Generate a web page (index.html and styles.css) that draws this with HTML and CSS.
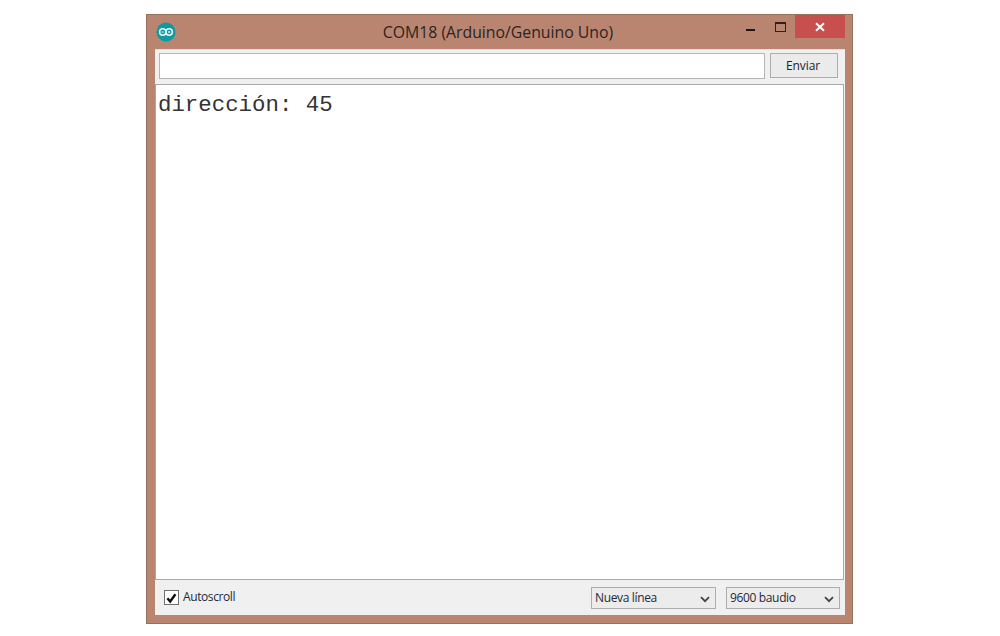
FILE: index.html
```html
<!DOCTYPE html>
<html lang="es">
<head>
<meta charset="utf-8">
<title>COM18 (Arduino/Genuino Uno)</title>
<link rel="stylesheet" href="styles.css">
</head>
<body>
<div class="window">
  <div class="titlebar">
    <svg class="logo" width="20" height="20" viewBox="0 0 20 20">
      <circle cx="10" cy="10" r="9.5" fill="#0f9a9f"/>
      <path d="M3.6 10a3.2 3.2 0 0 1 6.4 0a3.2 3.2 0 0 1 -6.4 0zM10 10a3.2 3.2 0 0 1 6.4 0a3.2 3.2 0 0 1 -6.4 0z" fill="none" stroke="#e4f5f5" stroke-width="1.5"/>
      <path d="M5.6 10h2.4M12 10h2.4M13.2 8.9v2.2" stroke="#e4f5f5" stroke-width="0.9"/>
    </svg>
    <div class="title">COM18 (Arduino/Genuino Uno)</div>
    <div class="controls">
      <span class="minimize"></span>
      <span class="maximize"></span>
      <span class="close">
        <svg width="10" height="10" viewBox="0 0 10 10"><path d="M1 1.2L9 8.8M9 1.2L1 8.8" stroke="#fff" stroke-width="2"/></svg>
      </span>
    </div>
  </div>
  <div class="client">
    <div class="sendbar">
      <div class="input"></div>
      <div class="button">Enviar</div>
    </div>
    <div class="output">dirección: 45</div>
    <div class="statusbar">
      <div class="check">
        <svg width="14" height="14" viewBox="0 0 14 14"><path d="M2.6 7.2L5.6 10.8L11.2 3" fill="none" stroke="#111" stroke-width="2.6"/></svg>
      </div>
      <span class="label">Autoscroll</span>
      <div class="select line"><span>Nueva línea</span><svg class="chev" width="10" height="7" viewBox="0 0 10 7"><path d="M1 1.2L5 5.2L9 1.2" fill="none" stroke="#444" stroke-width="1.8"/></svg></div>
      <div class="select baud"><span>9600 baudio</span><svg class="chev" width="10" height="7" viewBox="0 0 10 7"><path d="M1 1.2L5 5.2L9 1.2" fill="none" stroke="#444" stroke-width="1.8"/></svg></div>
    </div>
  </div>
</div>
</body>
</html>
```

FILE: styles.css
```css
* { box-sizing: border-box; }
html, body { margin: 0; height: 100%; background: #fff; overflow: hidden; }
body { padding-top: 14px; padding-left: 146px; font-family: "Open Sans", "Liberation Sans", sans-serif; }
.window {
  width: 707px;
  height: 610px;
  background: #b98570;
  border: 1px solid #97705f;
  display: flex;
  flex-direction: column;
  padding: 0 7px 8px 8px;
}
.titlebar {
  height: 34px;
  flex: none;
  display: flex;
  align-items: center;
  position: relative;
}
.logo { margin: 0 0 0 1px; flex: none; }
.title {
  position: absolute;
  left: 0;
  right: 4px;
  top: 7px;
  text-align: center;
  font-size: 15.8px;
  line-height: 20px;
  color: #2c2420;
}
.controls {
  position: absolute;
  top: -1px;
  right: 0;
  height: 24px;
  display: flex;
  align-items: flex-start;
}
.minimize {
  width: 9px;
  height: 2px;
  background: #1c1714;
  margin: 15px 20px 0 0;
}
.maximize {
  width: 11px;
  height: 10px;
  border: 1px solid #2a2320;
  border-top-width: 2px;
  margin: 8px 9px 0 0;
}
.close {
  width: 50px;
  height: 23px;
  margin-top: 1px;
  background: #c7504f;
  display: flex;
  align-items: center;
  justify-content: center;
}
.client {
  flex: 1;
  min-height: 0;
  background: #f0f0f0;
  display: flex;
  flex-direction: column;
  border-top: 1px solid #e3dcd9;
}
.sendbar {
  height: 34px;
  flex: none;
  display: flex;
  align-items: flex-start;
  padding: 3px 6px 0 4px;
  gap: 5px;
}
.input {
  width: 606px;
  height: 26px;
  background: #fff;
  border: 1px solid #b5b5b5;
}
.button {
  width: 68px;
  height: 25px;
  background: #ebebeb;
  border: 1px solid #adadad;
  font-size: 12px;
  line-height: 23px;
  text-align: center;
  padding-right: 2px;
  color: #222;
  letter-spacing: -0.1px;
}
.output {
  flex: 1;
  min-height: 0;
  background: #fff;
  margin: 0 1px 0 0;
  border: 1px solid #a8a8a8;
  padding: 8px 2px;
  font-family: "Liberation Mono", monospace;
  font-size: 22.4px;
  line-height: 24px;
  color: #333;
}
.statusbar {
  height: 35px;
  flex: none;
  display: flex;
  align-items: center;
  padding: 0 5px 0 9px;
  font-size: 12px;
  color: #1e2a3a;
}
.check {
  width: 15px;
  height: 15px;
  background: #fff;
  border: 1px solid #6f6f6f;
  display: flex;
  align-items: center;
  justify-content: center;
}
.label { margin-left: 4px; flex: 1; letter-spacing: -0.4px; line-height: 14px; padding-bottom: 2px; }
.select {
  height: 22px;
  background: #ececec;
  border: 1px solid #adadad;
  display: flex;
  align-items: center;
  justify-content: space-between;
  padding: 0 5px 0 3px;
  letter-spacing: -0.35px;
}
.line { width: 125px; margin-right: 10px; }
.baud { width: 114px; }
.chev { flex: none; margin-top: 3px; }
```
